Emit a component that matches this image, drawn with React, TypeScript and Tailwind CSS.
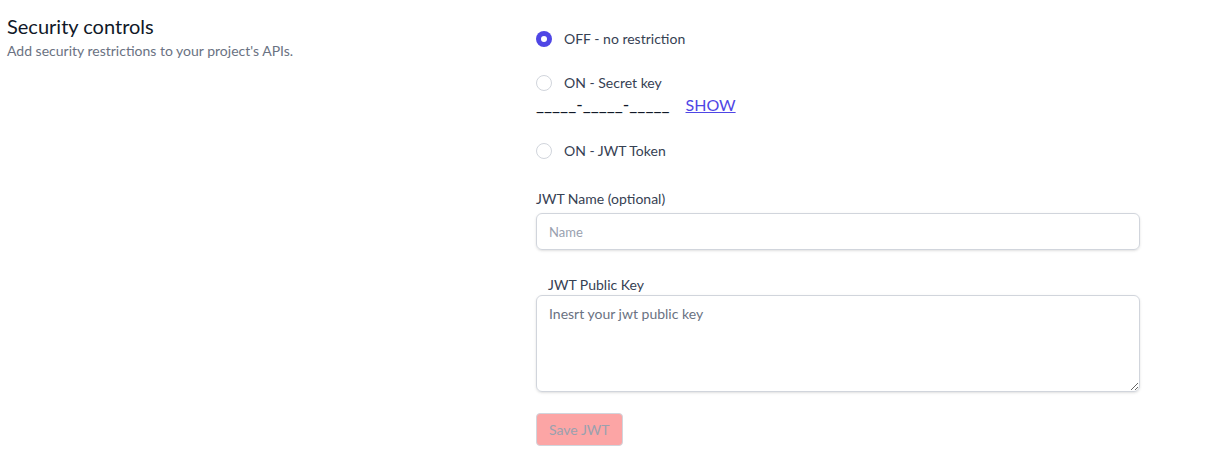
import React from "react";

function Radio({ checked, label }: { checked?: boolean; label: string }) {
  return (
    <label className="flex items-center h-5">
      {checked ? (
        <span className="h-4 w-4 rounded-full bg-[#4f46e5] flex items-center justify-center">
          <span className="h-1.5 w-1.5 rounded-full bg-white" />
        </span>
      ) : (
        <span className="h-4 w-4 rounded-full border border-gray-300 bg-white" />
      )}
      <span className="ml-3 text-sm text-gray-700">{label}</span>
    </label>
  );
}

export default function App() {
  const [show, setShow] = React.useState(false);

  return (
    <div className="min-h-[472px] bg-white font-['Lato',sans-serif] flex">
      <div className="w-[536px] pl-[7px] pt-[14px]">
        <h3 className="text-xl leading-6 text-gray-900">Security controls</h3>
        <p className="mt-[3px] text-sm text-gray-500">Add security restrictions to your project's APIs.</p>
      </div>

      <div className="w-[604px] pt-[29px]">
        <Radio checked label="OFF - no restriction" />

        <div className="mt-[24px]">
          <Radio label="ON - Secret key" />
          <div className="flex items-center h-6 leading-6">
            <span className="text-[17.5px] text-gray-900">{show ? "a1b2c-d3e4f-g5h6i" : "_____-_____-_____"}</span>
            <button
              type="button"
              onClick={() => setShow((s) => !s)}
              className="ml-4 text-base text-[#4f46e5] underline"
            >
              SHOW
            </button>
          </div>
        </div>

        <div className="mt-[24px]">
          <Radio label="ON - JWT Token" />
        </div>

        <div className="mt-[28px]">
          <label className="block text-sm text-gray-700">JWT Name (optional)</label>
          <input
            type="text"
            placeholder="Name"
            className="mt-[4px] block w-full h-[37px] rounded-md border border-gray-300 px-3 text-[13px] shadow-sm placeholder:text-gray-400 focus:outline-none"
          />
        </div>

        <div className="mt-[25px]">
          <label className="block pl-3 text-sm text-gray-700">JWT Public Key</label>
          <textarea
            placeholder="Inesrt your jwt public key"
            className="block w-full h-[97px] rounded-md border border-gray-300 px-3 py-2 text-sm shadow-sm placeholder:text-gray-500 focus:outline-none"
          />
        </div>

        <button
          type="button"
          disabled
          className="mt-[21px] h-[33px] px-3 rounded border border-gray-300 bg-[#fca5a5] text-sm text-gray-400"
        >
          Save JWT
        </button>
      </div>
    </div>
  );
}
